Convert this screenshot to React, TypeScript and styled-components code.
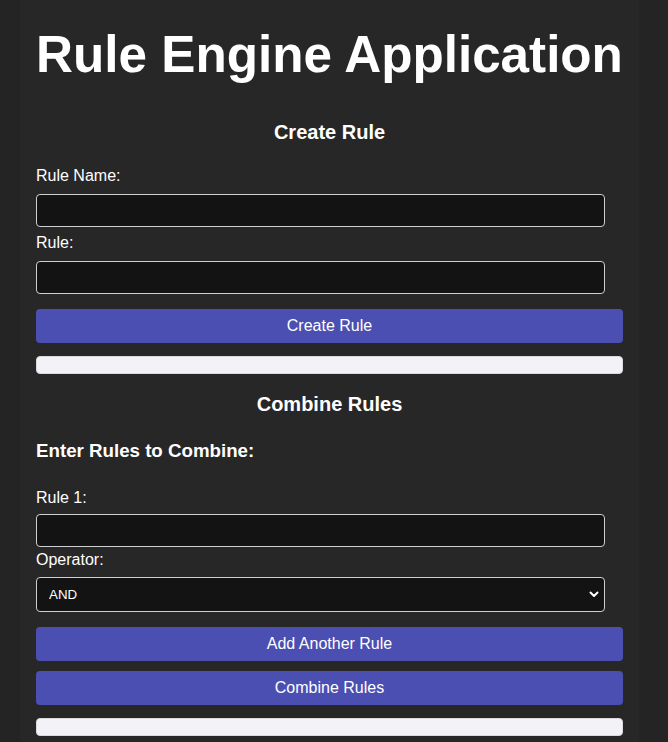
import React from "react";
import styled, { createGlobalStyle } from "styled-components";

const GlobalStyle = createGlobalStyle`
  html, body {
    margin: 0;
    padding: 0;
    background: #242424;
    color: #ffffff;
    font-family: "Liberation Sans", Arial, sans-serif;
  }
  * { box-sizing: border-box; }
`;

const Page = styled.div`
  padding-left: 20px;
`;

const Container = styled.div`
  width: 619px;
  background: #282728;
  padding: 27px 16px 40px;
  min-height: 742px;
`;

const Title = styled.h1`
  margin: 0;
  font-size: 51.2px;
  line-height: 56px;
  font-weight: 700;
  text-align: center;
  color: #ffffff;
`;

const SectionTitle = styled.h2<{ $mt: number }>`
  margin: ${(p) => p.$mt}px 0 0;
  font-size: 20px;
  line-height: 23px;
  font-weight: 700;
  text-align: center;
  color: #ffffff;
`;

const SubTitle = styled.h3`
  margin: 24px 0 0;
  font-size: 18.72px;
  line-height: 22px;
  font-weight: 700;
  text-align: left;
  color: #ffffff;
`;

const Label = styled.label<{ $mt: number }>`
  display: block;
  margin: ${(p) => p.$mt}px 0 0;
  font-size: 16px;
  line-height: 18px;
  color: #ffffff;
`;

const TextInput = styled.input<{ $mt?: number }>`
  display: block;
  width: 97%;
  height: 33px;
  margin: ${(p) => p.$mt ?? 9}px 0 0;
  padding: 8px;
  background: #131313;
  color: #ffffff;
  border: 1px solid #cfcfcf;
  border-radius: 4px;
  font-family: "Liberation Sans", Arial, sans-serif;
  font-size: 13.33px;
  outline: none;
`;

const SelectWrap = styled.div`
  position: relative;
  width: 97%;
  margin: 8px 0 0;
`;

const Select = styled.select`
  display: block;
  width: 100%;
  height: 35px;
  padding: 0 12px;
  appearance: none;
  background: #131313;
  color: #ffffff;
  border: 1px solid #cfcfcf;
  border-radius: 4px;
  font-family: "Liberation Sans", Arial, sans-serif;
  font-size: 13.33px;
  outline: none;
`;

const Chevron = styled.svg`
  position: absolute;
  right: 6px;
  top: 14px;
  width: 10px;
  height: 7px;
  pointer-events: none;
`;

const Button = styled.button<{ $mt: number }>`
  display: block;
  width: 100%;
  height: 34px;
  margin: ${(p) => p.$mt}px 0 0;
  padding: 0;
  background: #4b4fb1;
  color: #ffffff;
  border: none;
  border-radius: 4px;
  font-family: "Liberation Sans", Arial, sans-serif;
  font-size: 16px;
  cursor: pointer;
`;

const Status = styled.div`
  width: 100%;
  height: 18px;
  margin: 13px 0 0;
  background: #f2f2f7;
  border: 1px solid #d9d9de;
  border-radius: 4px;
`;

export default function App() {
  return (
    <>
      <GlobalStyle />
      <Page>
        <Container>
          <Title>Rule Engine Application</Title>

          <SectionTitle $mt={38}>Create Rule</SectionTitle>
          <Label $mt={23} htmlFor="ruleName">Rule Name:</Label>
          <TextInput id="ruleName" type="text" />
          <Label $mt={7} htmlFor="ruleText">Rule:</Label>
          <TextInput id="ruleText" type="text" />
          <Button $mt={15}>Create Rule</Button>
          <Status />

          <SectionTitle $mt={19}>Combine Rules</SectionTitle>
          <SubTitle>Enter Rules to Combine:</SubTitle>
          <Label $mt={27} htmlFor="rule1">Rule 1:</Label>
          <TextInput id="rule1" type="text" $mt={7} />
          <Label $mt={4} htmlFor="op">Operator:</Label>
          <SelectWrap>
            <Select id="op" defaultValue="AND">
              <option value="AND">AND</option>
              <option value="OR">OR</option>
            </Select>
            <Chevron viewBox="0 0 10 7">
              <path d="M1.5 1.5 L5 5 L8.5 1.5" fill="none" stroke="#ffffff" strokeWidth="2" strokeLinecap="round" strokeLinejoin="round" />
            </Chevron>
          </SelectWrap>
          <Button $mt={15}>Add Another Rule</Button>
          <Button $mt={10}>Combine Rules</Button>
          <Status />
        </Container>
      </Page>
    </>
  );
}
